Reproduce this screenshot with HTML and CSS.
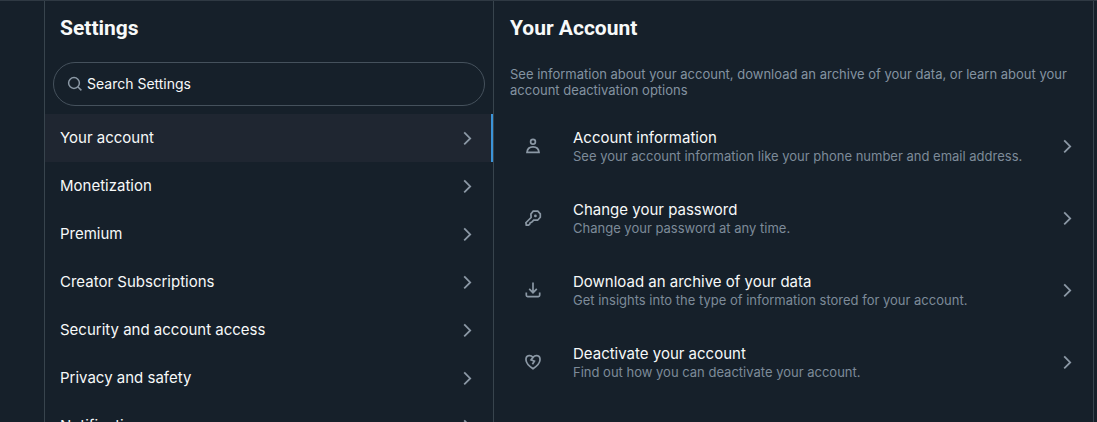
FILE: index.html
```
<!DOCTYPE html>
<html lang="en">
<head>
<meta charset="utf-8">
<title>Settings</title>
<link rel="stylesheet" href="styles.css">
</head>
<body>
<svg class="defs" aria-hidden="true">
  <symbol id="chevron" viewBox="0 0 20 20"><path d="M7.200 4.400l6 6-6 6"/></symbol>
</svg>
<div class="layout">
  <section class="settings">
    <h1 class="title">Settings</h1>
    <label class="search">
      <svg class="search-icon" viewBox="0 0 16 16" aria-hidden="true"><circle cx="7" cy="7" r="5.4"/><path d="M11 11l3.4 3.4"/></svg>
      <input class="search-input" type="search" placeholder="Search Settings" aria-label="Search Settings">
    </label>
    <nav class="menu">
      <a class="menu-item active" href="#account">Your account<svg class="chevron" aria-hidden="true"><use href="#chevron"/></svg></a>
      <a class="menu-item" href="#monetization">Monetization<svg class="chevron" aria-hidden="true"><use href="#chevron"/></svg></a>
      <a class="menu-item" href="#premium">Premium<svg class="chevron" aria-hidden="true"><use href="#chevron"/></svg></a>
      <a class="menu-item" href="#creator">Creator Subscriptions<svg class="chevron" aria-hidden="true"><use href="#chevron"/></svg></a>
      <a class="menu-item" href="#security">Security and account access<svg class="chevron" aria-hidden="true"><use href="#chevron"/></svg></a>
      <a class="menu-item" href="#privacy">Privacy and safety<svg class="chevron" aria-hidden="true"><use href="#chevron"/></svg></a>
      <a class="menu-item" href="#notifications">Notifications<svg class="chevron" aria-hidden="true"><use href="#chevron"/></svg></a>
    </nav>
  </section>
  <main class="detail">
    <h2 class="title">Your Account</h2>
    <p class="intro">See information about your account, download an archive of your data, or learn about your account deactivation options</p>
    <a class="option" href="#information">
      <svg class="option-icon" viewBox="0 0 20 20" aria-hidden="true"><circle cx="10" cy="5.700" r="2.400"/><path d="M4 16.400c.3-3.600 2.500-5.600 6-5.600s5.700 2 6 5.600z"/></svg>
      <span class="option-text"><span class="option-name">Account information</span><span class="option-note">See your account information like your phone number and email address.</span></span>
      <svg class="chevron" aria-hidden="true"><use href="#chevron"/></svg>
    </a>
    <a class="option" href="#password">
      <svg class="option-icon" viewBox="0 0 20 20" aria-hidden="true"><path d="M10.200 3.200h4.600l2.500 2.600v3.400l-2.700 3H10.700L8.600 14.300 7.300 14.600 6.800 16.100 5.600 17.100H3.300L2.900 14.700 8.100 9.500 7.900 6z"/><circle class="dot" cx="12.400" cy="7.900" r="1.400"/></svg>
      <span class="option-text"><span class="option-name">Change your password</span><span class="option-note">Change your password at any time.</span></span>
      <svg class="chevron" aria-hidden="true"><use href="#chevron"/></svg>
    </a>
    <a class="option" href="#archive">
      <svg class="option-icon" viewBox="0 0 20 20" aria-hidden="true"><path d="M10 2.500v10M6.200 8.900L10 12.700l3.800-3.800M3.300 12.500v2.800c0 .8.500 1.300 1.300 1.300h10.800c.8 0 1.300-.5 1.300-1.300v-2.800"/></svg>
      <span class="option-text"><span class="option-name">Download an archive of your data</span><span class="option-note">Get insights into the type of information stored for your account.</span></span>
      <svg class="chevron" aria-hidden="true"><use href="#chevron"/></svg>
    </a>
    <a class="option" href="#deactivate">
      <svg class="option-icon" viewBox="0 0 20 20" aria-hidden="true"><path d="M10 5.300C8.600 3.800 7.300 3.500 6.100 3.700 4.100 4 2.800 5.700 3 8c.2 3.200 3 6.100 7 8.700 4-2.600 6.800-5.500 7-8.700.2-2.300-1.100-4-3.100-4.300-1.200-.2-2.500.1-3.900 1.600z"/><path d="M10 5.300L8.100 7.900l3.300 1.200-2 3.200"/></svg>
      <span class="option-text"><span class="option-name">Deactivate your account</span><span class="option-note">Find out how you can deactivate your account.</span></span>
      <svg class="chevron" aria-hidden="true"><use href="#chevron"/></svg>
    </a>
  </main>
</div>
</body>
</html>
```
FILE: styles.css
```
* { box-sizing: border-box; }
body {
  margin: 0;
  height: 100vh;
  overflow: hidden;
  background: #16202a;
  color: #f7f9f9;
  font-family: Inter, Roboto, "Liberation Sans", sans-serif;
  font-size: 15px;
  line-height: 20px;
}
a { color: inherit; text-decoration: none; }
svg { fill: none; stroke: #8b98a5; }
.defs { display: none; }
.layout {
  display: grid;
  grid-template-columns: minmax(0, 3fr) minmax(0, 4fr);
  min-height: 100vh;
  padding: 0 3px 0 44px;
  border-top: 1px solid #2f3943;
}
.settings {
  border-left: 1px solid #38444d;
  border-right: 1px solid #38444d;
}
.detail { border-right: 1px solid #38444d; }
.title {
  margin: 0;
  padding: 1px 16px 0;
  font-family: Roboto, "Liberation Sans", sans-serif;
  font-size: 21px;
  font-weight: 700;
  line-height: 52px;
}
.settings .title, .menu-item { padding-left: 15px; }
.search {
  display: flex;
  align-items: center;
  gap: 4px;
  height: 44px;
  margin: 8px;
  padding: 0 13px;
  border: 1px solid #45515c;
  border-radius: 22px;
}
.search-icon { flex: none; width: 16px; height: 16px; stroke-width: 1.500; }
.search-input {
  flex: 1;
  min-width: 0;
  padding: 0;
  border: 0;
  outline: 0;
  background: none;
  color: inherit;
  font: inherit;
  font-size: 14px;
}
.search-input::placeholder { color: #f7f9f9; opacity: 1; }
.menu-item {
  display: flex;
  align-items: center;
  justify-content: space-between;
  height: 48px;
  padding-right: 16px;
}
.active {
  padding-right: 14px;
  border-right: 2px solid #3b94d9;
  background: #1f2631;
}
.chevron { flex: none; width: 20px; height: 20px; stroke-width: 1.800; }
.intro {
  margin: 12px 16px;
  color: #8493a1;
  font-size: 13px;
  line-height: 16px;
}
.option {
  display: flex;
  align-items: center;
  height: 72px;
  padding: 0 16px;
}
.option-icon { flex: none; width: 20px; height: 20px; margin: 0 30px 0 13px; stroke-width: 1.700; }
.dot { fill: #8b98a5; stroke: none; }
.option-text { flex: 1; min-width: 0; }
.option-name, .option-note { display: block; }
.option-note { color: #7d8b99; font-size: 13px; line-height: 16px; }
```
